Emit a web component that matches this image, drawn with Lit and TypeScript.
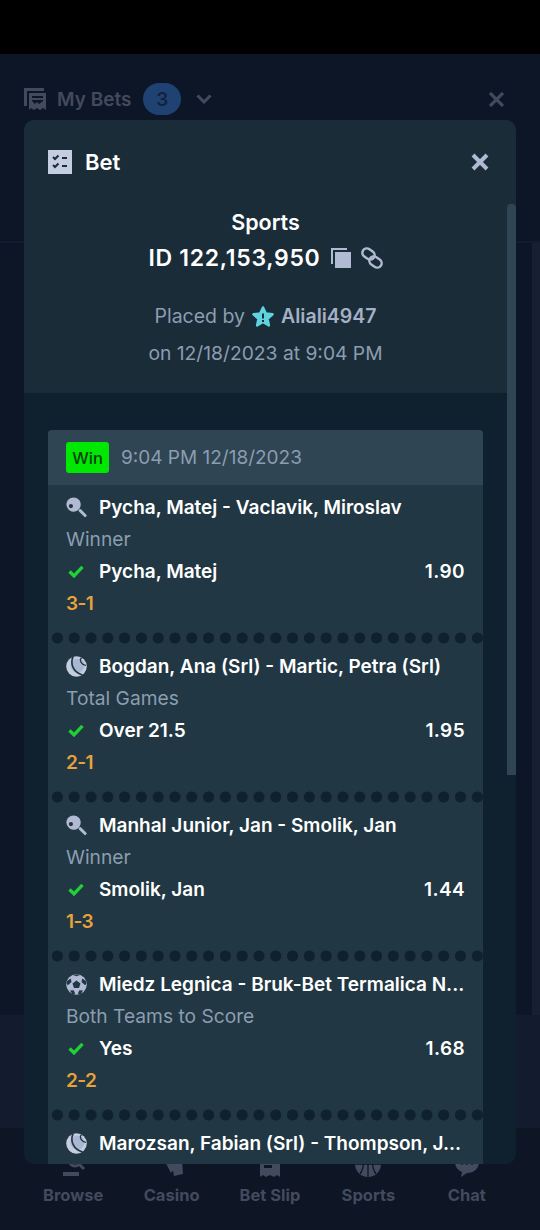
import { LitElement, html, css, svg } from "lit";
import { customElement } from "lit/decorators.js";

const paddle = svg`<svg class="sport" viewBox="0 0 20 20"><path fill="#b1bad3" d="M7.200.5c3.800 0 6.800 3 6.800 6.700 0 1.700-.6 3.200-1.600 4.400l-.9.900c-1.200 1-2.700 1.500-4.300 1.500-1.200 0-2.400-.3-3.400-.9C1.700 11.400.4 9.400.4 7.200.4 3.500 3.400.5 7.200.5Z"/><circle cx="4.700" cy="8.600" r="2" fill="#213743"/><path stroke="#b1bad3" stroke-width="2.800" stroke-linecap="round" d="M13.500 13l4.700 4.700"/></svg>`;
const tennis = svg`<svg class="sport" viewBox="0 0 21 21"><circle cx="10.500" cy="10.500" r="10.300" fill="#c5cde0"/><circle cx="11.500" cy="9.500" r="7" fill="#aab7d2"/><path fill="none" stroke="#213743" stroke-width="1.700" d="M7 .8C3.800 8 7.500 16.500 16.500 19"/><path fill="none" stroke="#213743" stroke-width="1.200" d="M15.500 1.800C13 4 15 8.500 20 9.500"/></svg>`;
const soccer = svg`<svg class="sport" viewBox="0 0 21 21"><circle cx="10.500" cy="10.500" r="10.300" fill="#b1bad3"/><path fill="#213743" d="M10.500 6.500l4 2.900-1.500 4.700H8l-1.500-4.700zM7 .9l3.500 1.300L14 .9l-3.500-.5zM1 7l3.800-2.600.7 3.600-3.600 3.200-1.300-1.500zM20 7l-3.800-2.600-.7 3.600 3.600 3.200 1.300-1.500zM4 16.500l3.700-.2 1.500 3.500-2.700.7zM17 16.500l-3.700-.2-1.500 3.500 2.700.7z"/></svg>`;
const check = svg`<svg class="check" viewBox="0 0 16 13"><path fill="none" stroke="#1fd136" stroke-width="3.400" d="M1.500 6.500l4.500 4.300 8.500-9"/></svg>`;

interface Leg { icon: unknown; title: string; market?: string; outcome?: string; odds?: string; score?: string; }
const legs: Leg[] = [
  { icon: paddle, title: "Pycha, Matej - Vaclavik, Miroslav", market: "Winner", outcome: "Pycha, Matej", odds: "1.90", score: "3-1" },
  { icon: tennis, title: "Bogdan, Ana (Srl) - Martic, Petra (Srl)", market: "Total Games", outcome: "Over 21.5", odds: "1.95", score: "2-1" },
  { icon: paddle, title: "Manhal Junior, Jan - Smolik, Jan", market: "Winner", outcome: "Smolik, Jan", odds: "1.44", score: "1-3" },
  { icon: soccer, title: "Miedz Legnica - Bruk-Bet Termalica N...", market: "Both Teams to Score", outcome: "Yes", odds: "1.68", score: "2-2" },
  { icon: tennis, title: "Marozsan, Fabian (Srl) - Thompson, J..." },
];

const navItems = [
  { label: "Browse", icon: svg`<svg viewBox="0 0 28 26"><path fill="#434a5e" d="M1 3h9v3H1zM1 10h7v3H1zM4 21h16v4H4z"/><circle cx="16" cy="9" r="6" fill="none" stroke="#434a5e" stroke-width="3"/><path stroke="#434a5e" stroke-width="3" d="M20 13l5 5"/></svg>` },
  { label: "Casino", icon: svg`<svg viewBox="0 0 28 26"><path fill="#434a5e" d="M3 3l9-2 5 16-4 5zM13 9l11-1 1 15-9 2z"/></svg>` },
  { label: "Bet Slip", icon: svg`<svg viewBox="0 0 28 26"><path fill="#434a5e" fill-rule="evenodd" d="M4 0h20v26l-3-2-3 2-4-2-4 2-3-2-3 2zM8 8v3h12V8zM8 14v3h8v-3z"/></svg>` },
  { label: "Sports", icon: svg`<svg viewBox="0 0 28 26"><circle cx="14" cy="13" r="13" fill="#434a5e"/><path fill="none" stroke="#0d1626" stroke-width="1.300" d="M14 0v26M1 13h26M6 3c4 3 5 13 0 20M22 3c-4 3-5 13 0 20"/></svg>` },
  { label: "Chat", icon: svg`<svg viewBox="0 0 28 26"><path fill="#434a5e" d="M14 0c7 0 12 4.500 12 11s-5 11-12 11l-6 4 1-5C4.500 19 2 15.500 2 11 2 4.500 7 0 14 0Z"/><circle cx="9" cy="12" r="1.800" fill="#0d1626"/><circle cx="14" cy="12" r="1.800" fill="#0d1626"/><circle cx="19" cy="12" r="1.800" fill="#0d1626"/></svg>` },
];

@customElement("app-root")
export class AppRoot extends LitElement {
  static styles = css`
    :host { display: block; width: 540px; height: 1230px; position: relative; overflow: hidden; background: #0d1626; font-family: "Inter", "Liberation Sans", sans-serif; color: #fff; }
    .status { height: 54px; background: #000; }
    .page { height: 1176px; display: flex; flex-direction: column; }
    .topbar { height: 90px; flex: none; box-sizing: border-box; padding: 0 24px; display: flex; align-items: center; color: #434a5e; font-size: 19px; font-weight: 600; }
    .topbar .mybets { width: 22px; height: 22px; margin-right: 11px; }
    .badge { width: 38px; height: 32px; margin-left: 12px; border-radius: 16px; background: #1f4273; color: #11233c; display: flex; align-items: center; justify-content: center; }
    .chev { width: 16px; height: 10px; margin-left: 15px; }
    .topx { width: 15px; height: 15px; margin-left: auto; margin-right: 12px; }
    .subbar { height: 99px; flex: none; border-bottom: 2px solid #111c2e; box-sizing: border-box; }
    .content { flex: 1; display: flex; justify-content: flex-end; }
    .rail { width: 8px; background: #171f33; }
    .promo { height: 113px; flex: none; background: #131c2f; }
    .nav { height: 102px; flex: none; background: #0e1524; display: grid; grid-template-columns: repeat(5, 98.400px); padding: 0 24px; box-sizing: border-box; }
    .nav-item { display: flex; flex-direction: column; align-items: center; color: #434a5e; font-size: 16.500px; font-weight: 700; white-space: nowrap; }
    .nav-item svg { width: 28px; height: 26px; margin-top: 23px; margin-bottom: 8px; flex: none; }
    .modal { position: absolute; left: 24px; top: 120px; width: 492px; height: 1044px; border-radius: 10px; background: #0f212e; overflow: hidden; }
    .head { height: 273px; background: #1a2c38; display: flex; flex-direction: column; }
    .head-row { display: flex; align-items: center; height: 24px; margin-top: 30px; padding: 0 27px 0 24px; }
    .head-row .list { width: 24px; height: 24px; margin-right: 13px; }
    .head-row span { font-size: 22px; font-weight: 600; }
    .close { width: 18px; height: 18px; margin-left: auto; }
    .center { display: flex; flex-direction: column; align-items: center; padding-right: 9px; }
    .sports { font-size: 21.500px; font-weight: 600; margin-top: 30px; line-height: 36px; }
    .id { font-size: 23px; font-weight: 600; line-height: 36px; display: flex; align-items: center; letter-spacing: .7px; }
    .id .copy { width: 20px; height: 20px; margin-left: 10px; }
    .id .link { width: 22px; height: 22px; margin-left: 10px; }
    .placed { margin-top: 22px; line-height: 37px; font-size: 19.500px; color: #8c9db1; display: flex; align-items: center; }
    .placed svg { width: 24px; height: 24px; margin: 0 6px; }
    .placed b { color: #a4b0c4; font-weight: 600; }
    .on { line-height: 37px; font-size: 19.250px; color: #8c9db1; }
    .scrollbar { position: absolute; right: 0; top: 84px; width: 9px; height: 571px; background: #2f4553; border-radius: 4px 4px 0 0; }
    .card { margin: 37px 33px 0 24px; background: #213743; border-radius: 4px 4px 0 0; overflow: hidden; height: 734px; }
    .card-head { height: 55px; background: #2f4553; padding: 0 18px; display: flex; align-items: center; color: #8c9db1; font-size: 19px; }
    .win { width: 43px; height: 31px; border-radius: 3px; background: #00e701; color: #05400a; font-size: 16.500px; font-weight: 500; display: flex; align-items: center; justify-content: center; margin-right: 12px; }
    .leg { padding: 6px 18px 0; }
    .line { height: 32px; display: flex; align-items: center; font-size: 19px; }
    .icon-box { width: 33px; flex: none; display: flex; align-items: center; }
    .sport { width: 21px; height: 21px; }
    .check { width: 16px; height: 13px; margin-left: 2px; }
    .title { font-weight: 600; white-space: nowrap; }
    .market { color: #8c9db1; font-size: 19.200px; }
    .outcome { font-weight: 600; }
    .odds { margin-left: auto; font-weight: 600; letter-spacing: .4px; }
    .score { color: #e9a23b; font-weight: 600; letter-spacing: -.6px; }
    .dots { height: 12px; margin-top: 13px; margin-left: -17px; margin-right: -18px; background-image: radial-gradient(circle at 8.400px 6px, #0f212e 5.300px, transparent 5.800px); background-size: 16.800px 12px; background-repeat: repeat-x; }
  `;

  render() {
    return html`
      <div class="status"></div>
      <div class="page">
        <div class="topbar">
          <svg class="mybets" viewBox="0 0 22 22"><path fill="#434a5e" d="M0 0h20v3H3v15H0z"/><path fill="#434a5e" fill-rule="evenodd" d="M5 5h17v17l-3-2-3 2-3-2-3 2-3-2-2 2zM8 8v2h11V8zM8 13l3 3 2-2 2 2 4-3v-1H8z"/></svg>
          <span>My Bets</span>
          <div class="badge">3</div>
          <svg class="chev" viewBox="0 0 16 10"><path fill="none" stroke="#434a5e" stroke-width="3" d="M1.500 1.500L8 8l6.500-6.500"/></svg>
          <svg class="topx" viewBox="0 0 15 15"><path stroke="#434a5e" stroke-width="3.200" d="M1 1l13 13M14 1L1 14"/></svg>
        </div>
        <div class="subbar"></div>
        <div class="content"><div class="rail"></div></div>
        <div class="promo"></div>
        <div class="nav">
          ${navItems.map((n) => html`<div class="nav-item">${n.icon}<span>${n.label}</span></div>`)}
        </div>
      </div>
      <div class="modal">
        <div class="head">
          <div class="head-row">
            <svg class="list" viewBox="0 0 24 24"><rect width="24" height="24" fill="#c5cde0"/><path fill="none" stroke="#1a2c38" stroke-width="2" d="M5 7l2 2 3.500-3.500M5 15l2 2 3.500-3.500"/><path stroke="#1a2c38" stroke-width="2" d="M14 8h5M14 16h5"/></svg>
            <span>Bet</span>
            <svg class="close" viewBox="0 0 18 18"><path stroke="#b1bad3" stroke-width="4" d="M2 2l14 14M16 2L2 16"/></svg>
          </div>
          <div class="center">
            <div class="sports">Sports</div>
            <div class="id">ID 122,153,950
              <svg class="copy" viewBox="0 0 20 20"><path fill="#b1bad3" d="M0 0h16v2H2v14H0z"/><rect x="4" y="4" width="16" height="16" fill="#b1bad3"/></svg>
              <svg class="link" viewBox="0 0 22 22"><g fill="none" stroke="#b1bad3" stroke-width="2.400"><rect x="1" y="2.500" width="13" height="9" rx="4.500" transform="rotate(35 7.500 7)"/><rect x="8" y="10.500" width="13" height="9" rx="4.500" transform="rotate(35 14.500 15)"/></g></svg>
            </div>
            <div class="placed">Placed by
              <svg viewBox="0 0 24 24"><path fill="#5fd3e0" stroke="#5fd3e0" stroke-width="2.500" stroke-linejoin="round" d="M12 2.500l2.800 6 6.700.8-5 4.500 1.400 6.600L12 17l-5.900 3.400 1.400-6.600-5-4.500 6.700-.8z"/><path stroke="#1a2c38" stroke-width="2" d="M12 8.500v5M12 15v2"/></svg>
              <b>Aliali4947</b></div>
            <div class="on">on 12/18/2023 at 9:04 PM</div>
          </div>
        </div>
        <div class="card">
          <div class="card-head"><div class="win">Win</div>9:04 PM 12/18/2023</div>
          ${legs.map((l) => html`
            <div class="leg">
              <div class="line"><div class="icon-box">${l.icon}</div><div class="title">${l.title}</div></div>
              ${l.market ? html`
                <div class="line market">${l.market}</div>
                <div class="line"><div class="icon-box">${check}</div><div class="outcome">${l.outcome}</div><div class="odds">${l.odds}</div></div>
                <div class="line score">${l.score}</div>
                <div class="dots"></div>` : ""}
            </div>`)}
        </div>
        <div class="scrollbar"></div>
      </div>
    `;
  }
}
